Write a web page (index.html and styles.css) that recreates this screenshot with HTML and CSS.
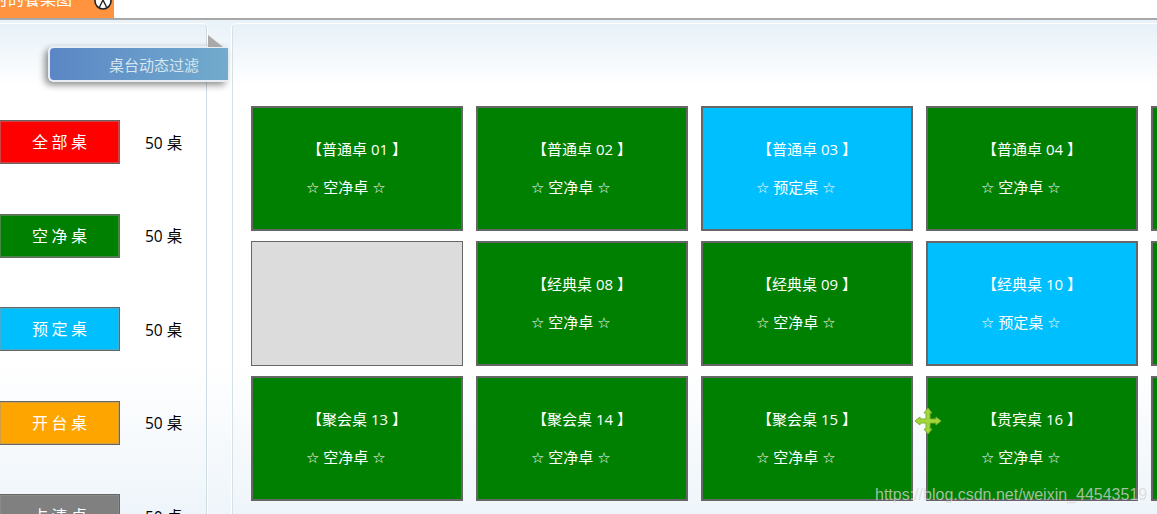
FILE: index.html
```html
<!DOCTYPE html>
<html lang="zh">
<head>
<meta charset="utf-8">
<title>餐桌图</title>
<link rel="stylesheet" href="styles.css">
</head>
<body>
<div class="topbar">
  <div class="tab">
    <span class="tab-text">实时的餐桌图</span>
    <svg class="tab-close" width="18" height="18" viewBox="0 0 18 18"><circle cx="9" cy="9" r="8" fill="#fff" stroke="#222" stroke-width="1.6"/><path d="M5.5 15 9 8 12.5 15M6.5 4.5 9 8" stroke="#222" stroke-width="1.4" fill="none"/></svg>
  </div>
</div>
<div class="main">
  <aside class="side">
    <div class="legend">
      <div class="legend-row"><div class="lbtn red">全 部 桌</div><span class="count">50 桌</span></div>
      <div class="legend-row"><div class="lbtn green">空 净 桌</div><span class="count">50 桌</span></div>
      <div class="legend-row"><div class="lbtn blue">预 定 桌</div><span class="count">50 桌</span></div>
      <div class="legend-row"><div class="lbtn orange">开 台 桌</div><span class="count">50 桌</span></div>
      <div class="legend-row"><div class="lbtn gray">占 清 桌</div><span class="count">50 桌</span></div>
    </div>
  </aside>
  <div class="ribbon">桌台动态过滤</div>
  <div class="fold"></div>
  <section class="content">
    <div class="grid">
      <div class="card green"><p class="t">【普通卓 01 】</p><p class="s">☆ 空净卓 ☆</p></div>
      <div class="card green"><p class="t">【普通卓 02 】</p><p class="s">☆ 空净卓 ☆</p></div>
      <div class="card blue"><p class="t">【普通卓 03 】</p><p class="s">☆ 预定桌 ☆</p></div>
      <div class="card green"><p class="t">【普通卓 04 】</p><p class="s">☆ 空净卓 ☆</p></div>
      <div class="card green"></div>
      <div class="card empty"></div>
      <div class="card green"><p class="t">【经典桌 08 】</p><p class="s">☆ 空净卓 ☆</p></div>
      <div class="card green"><p class="t">【经典桌 09 】</p><p class="s">☆ 空净卓 ☆</p></div>
      <div class="card blue"><p class="t">【经典桌 10 】</p><p class="s">☆ 预定桌 ☆</p></div>
      <div class="card green"></div>
      <div class="card green"><p class="t">【聚会桌 13 】</p><p class="s">☆ 空净卓 ☆</p></div>
      <div class="card green"><p class="t">【聚会桌 14 】</p><p class="s">☆ 空净卓 ☆</p></div>
      <div class="card green"><p class="t">【聚会桌 15 】</p><p class="s">☆ 空净卓 ☆</p></div>
      <div class="card green"><p class="t">【贵宾桌 16 】</p><p class="s">☆ 空净卓 ☆</p></div>
      <div class="card green"></div>
    </div>
  </section>
  <svg class="cursor" width="28" height="28" viewBox="0 0 28 28"><path d="M14 1 18 6H16V12H22V10L27 14 22 18V16H16V22H18L14 27 10 22H12V16H6V18L1 14 6 10V12H12V6H10Z" fill="#a2d83c" stroke="#7fb02a" stroke-width="1"/></svg>
</div>
<div class="watermark">https://blog.csdn.net/weixin_44543519</div>
</body>
</html>
```
FILE: styles.css
```css
* { box-sizing: border-box; }
html, body { margin: 0; height: 514px; overflow: hidden; }
body { position: relative; background: #fff; font-family: "Open Sans", "DejaVu Sans", "Noto Sans CJK SC", sans-serif; }
.topbar { height: 20px; border-bottom: 2px solid #a8a8a8; background: #fff; }
.tab { width: 114px; height: 18px; background: #ff9340; position: relative; overflow: hidden; }
.tab-text { position: absolute; left: -24px; top: -12px; font-size: 16px; line-height: 22px; color: #fff; white-space: nowrap; }
.tab-close { position: absolute; left: 94px; top: -8px; }
.main { position: relative; display: flex; height: 494px; padding-top: 3px; background: linear-gradient(#e8f2f8, #fff 65px, #fff 340px, #eff5fa); }
.side { width: 207px; flex: none; border-top: 1px solid #fff; border-right: 1px solid #d0dce4; border-radius: 0 5px 0 0; background: linear-gradient(#e7f1f8 0, #fff 62px, #fff 340px, #eef5fa 100%); box-shadow: 1px 0 0 #fff; overflow: hidden; padding-top: 96px; }
.legend { display: flex; flex-direction: column; gap: 49.5px; }
.legend-row { display: flex; align-items: center; height: 44px; gap: 25px; flex: none; }
.lbtn { width: 120px; height: 44px; flex: none; border: 1px solid #666; border-left: 0; box-shadow: inset 0 0 0 1px rgba(150,150,150,.45); color: #fff; font-size: 16px; word-spacing: -.7px; line-height: 43px; text-align: center; }
.lbtn.red { background: #f00; }
.lbtn.green, .card.green { background: #008000; }
.lbtn.blue, .card.blue { background: #00bfff; }
.lbtn.orange { background: #ffa500; }
.lbtn.gray { background: #808080; }
.count { font-size: 15.5px; color: #000; }
.ribbon { position: absolute; left: 48px; top: 26px; width: 180px; height: 36px; padding-left: 59px; border: 2px solid #e8eef4; border-right: 0; border-radius: 6px 0 0 6px; background: linear-gradient(90deg, #5b86c5, #72abcd); color: #d6e6ef; font-size: 15px; line-height: 34px; box-shadow: -3px 3px 7px rgba(0,0,0,.45); }
.fold { position: absolute; left: 208px; top: 15px; width: 0; height: 0; border-bottom: 12px solid #a9a9a9; border-right: 15px solid transparent; }
.content { margin-left: 25px; flex: 1; min-width: 0; border-top: 1px solid #fff; border-left: 1px solid #d6e0e7; border-radius: 5px 0 0 0; background: linear-gradient(#e7f1f8 0, #fff 62px, #fff 340px, #eef5fa 100%); box-shadow: -1px 0 0 #fff; overflow: hidden; padding: 82px 0 0 18px; }
.grid { display: grid; grid-template-columns: repeat(5, 212px); grid-auto-rows: 125px; column-gap: 13px; row-gap: 10px; width: 1200px; }
.card { border: 2px solid #666; color: #fff; font-size: 15px; line-height: 20px; }
.card.empty { background: #dcdcdc; border-width: 1px; }
.t { margin: 31px 0 0; text-align: center; }
.s { margin: 18px 0 0; padding-left: 53px; white-space: nowrap; }
.cursor { position: absolute; left: 914px; top: 387px; }
.watermark { position: absolute; left: 875px; top: 485px; font-family: "Liberation Sans", sans-serif; font-size: 16px; line-height: 20px; color: rgba(215,215,215,.75); white-space: nowrap; }
```
